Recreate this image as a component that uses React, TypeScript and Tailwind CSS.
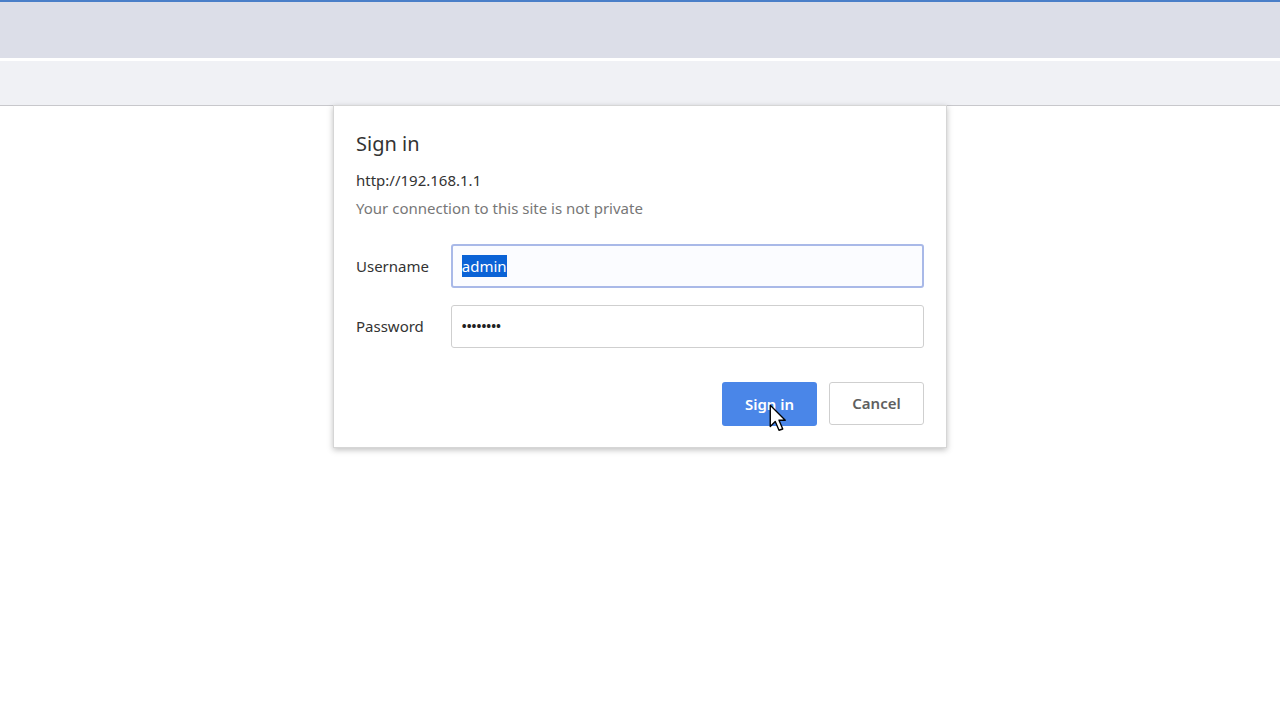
import React from "react";

export default function App() {
  const font = { fontFamily: '"Segoe UI", "Noto Sans", "Open Sans", sans-serif' };
  return (
    <div className="relative w-[1280px] h-[720px] bg-white overflow-hidden" style={font}>
      <div className="h-[2px] bg-[#4a7fc8]" />
      <div className="h-[56px] bg-[#dcdee8]" />
      <div className="h-[3px] bg-white" />
      <div className="h-[45px] bg-[#f0f1f5] border-b border-[#c8c8cc]" />

      <div className="absolute left-[333px] top-[105px] w-[614px] h-[343px] bg-white border border-[#d6d6d6] shadow-[0_2px_6px_rgba(0,0,0,0.25)] px-[22px] pt-[26px]">
        <div className="text-[20px] leading-[24px] text-[#333]">Sign in</div>
        <div className="mt-[14px] text-[15px] leading-[20px] text-[#333]">http://192.168.1.1</div>
        <div className="mt-[8px] text-[15px] leading-[20px] text-[#777]">Your connection to this site is not private</div>

        <div className="mt-[26px] flex items-center">
          <div className="w-[95px] text-[15px] text-[#333]">Username</div>
          <div className="w-[474px] h-[44px] rounded-[3px] border-2 border-[#a9b9e8] bg-[#fbfcff] flex items-center px-[9px]">
            <span className="bg-[#0b63d6] text-white text-[15px] leading-[22px]">admin</span>
          </div>
        </div>

        <div className="mt-[17px] flex items-center">
          <div className="w-[95px] text-[15px] text-[#333]">Password</div>
          <div className="w-[474px] h-[43px] rounded-[3px] border border-[#cfcfcf] bg-white flex items-center px-[10px]">
            <span className="text-[13px] tracking-[0px] text-[#222] font-bold">••••••••</span>
          </div>
        </div>

        <div className="mt-[34px] flex justify-end gap-[12px]">
          <div className="relative w-[95px] h-[44px] rounded-[3px] bg-[#4a86e8] flex items-center justify-center text-white text-[15px] font-semibold">
            Sign in
            <svg className="absolute left-[47px] top-[22px]" width="20" height="30" viewBox="0 0 16 24">
              <path d="M1 1 L1 18 L5 14 L8 21 L11 20 L8 13 L13 13 Z" fill="#fff" stroke="#000" strokeWidth="1.1" strokeLinejoin="round" />
            </svg>
          </div>
          <div className="w-[95px] h-[43px] rounded-[3px] border border-[#cfcfcf] bg-white flex items-center justify-center text-[#5f5f5f] text-[15px] font-semibold">
            Cancel
          </div>
        </div>
      </div>
    </div>
  );
}
